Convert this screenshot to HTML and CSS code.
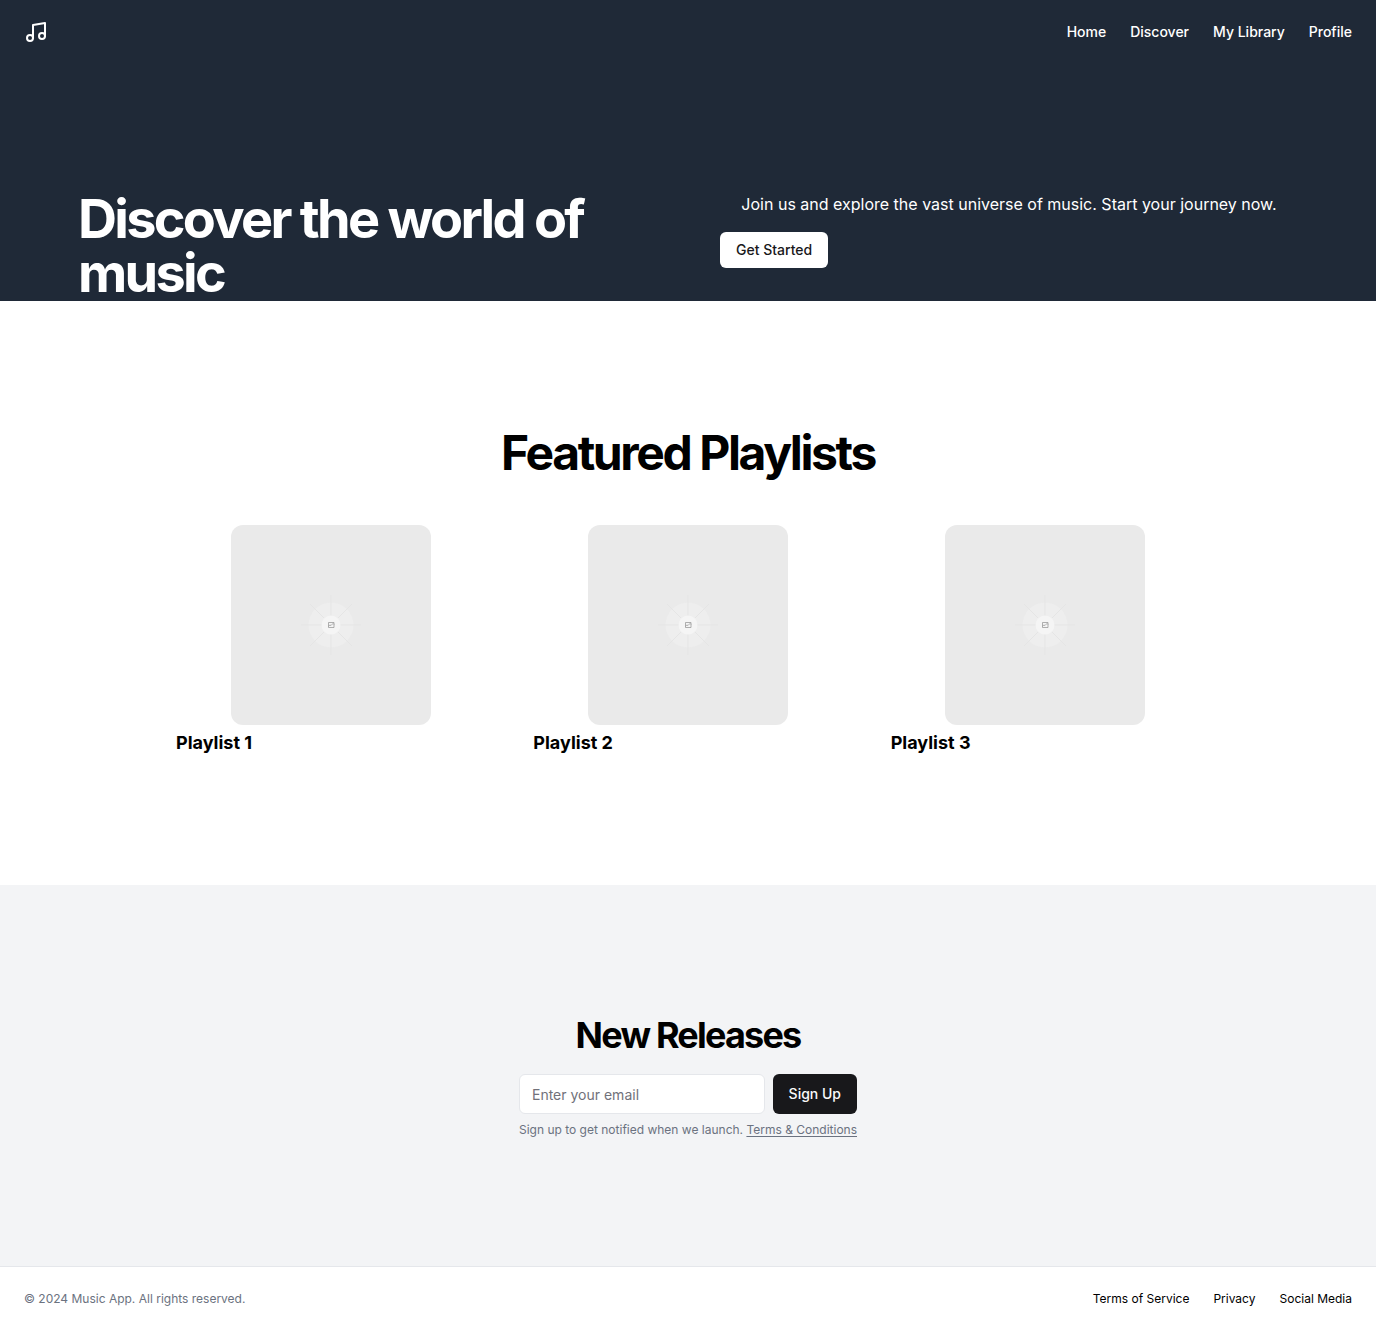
FILE: index.html
```html
<!DOCTYPE html>
<html lang="en">
<head>
  <meta charset="utf-8">
  <meta name="viewport" content="width=device-width, initial-scale=1">
  <title>Music App</title>
  <link rel="stylesheet" href="styles.css">
</head>
<body>
  <svg class="defs" width="0" height="0" aria-hidden="true">
    <symbol id="cover" viewBox="0 0 200 200">
      <circle cx="100" cy="100" r="22.500" fill="#eeeeee"/>
      <g stroke="#e5e5e5" stroke-width="1">
        <path d="M100 70v60M70 100h60M79 79l42 42M121 79l-42 42"/>
      </g>
      <circle cx="100" cy="100" r="9.500" fill="#f5f5f5"/>
      <g fill="none" stroke="#8f8f8f" stroke-width=".7">
        <path d="M97.500 97.500h5.500v5h-5.500z"/>
        <path d="M97.500 101l1.500-1 1 .5 2-2 1 1"/>
      </g>
    </symbol>
  </svg>

  <header class="header">
    <a class="logo" href="#" aria-label="Music App">
      <svg width="24" height="24" viewBox="0 0 24 24" fill="none" stroke="currentColor" stroke-width="2" stroke-linecap="round" stroke-linejoin="round" aria-hidden="true">
        <path d="M9 18V5l12-2v13"/>
        <circle cx="6" cy="18" r="3"/>
        <circle cx="18" cy="16" r="3"/>
      </svg>
    </a>
    <nav class="nav">
      <a href="#">Home</a>
      <a href="#">Discover</a>
      <a href="#">My Library</a>
      <a href="#">Profile</a>
    </nav>
  </header>

  <main>
    <section class="hero">
      <div class="hero-grid">
        <h1>Discover the world of music</h1>
        <div class="hero-side">
          <p>Join us and explore the vast universe of music. Start your journey now.</p>
          <button class="button button-light" type="button">Get Started</button>
        </div>
      </div>
    </section>

    <section class="featured">
      <h2>Featured Playlists</h2>
      <div class="playlists">
        <article class="playlist">
          <svg class="cover" aria-hidden="true"><use href="#cover"/></svg>
          <h3>Playlist 1</h3>
        </article>
        <article class="playlist">
          <svg class="cover" aria-hidden="true"><use href="#cover"/></svg>
          <h3>Playlist 2</h3>
        </article>
        <article class="playlist">
          <svg class="cover" aria-hidden="true"><use href="#cover"/></svg>
          <h3>Playlist 3</h3>
        </article>
      </div>
    </section>

    <section class="releases">
      <h2>New Releases</h2>
      <div class="signup">
        <form class="signup-form">
          <input type="email" placeholder="Enter your email" aria-label="Enter your email">
          <button class="button button-dark" type="submit">Sign Up</button>
        </form>
        <p>Sign up to get notified when we launch. <a href="#">Terms &amp; Conditions</a></p>
      </div>
    </section>
  </main>

  <footer class="footer">
    <p>© 2024 Music App. All rights reserved.</p>
    <nav class="footer-nav">
      <a href="#">Terms of Service</a>
      <a href="#">Privacy</a>
      <a href="#">Social Media</a>
    </nav>
  </footer>
</body>
</html>
```
FILE: styles.css
```css
* {
  box-sizing: border-box;
}

body {
  margin: 0;
  font-family: Inter, "Liberation Sans", sans-serif;
  font-size: 16px;
  line-height: 24px;
  color: #000;
  background: #fff;
}

h1, h2, h3, p {
  margin: 0;
}

h1, h2 {
  font-weight: 700;
  letter-spacing: -0.05em;
}

a {
  color: inherit;
  text-decoration: none;
}

.defs {
  position: absolute;
}

.header {
  display: flex;
  align-items: center;
  justify-content: space-between;
  padding: 20px 24px;
  color: #fff;
  background: #1f2937;
}

.logo {
  display: flex;
}

.nav {
  display: flex;
  gap: 24px;
  font-size: 14px;
  line-height: 20px;
  font-weight: 500;
}

.hero {
  padding-top: 128px;
  border-bottom: 1px solid #1f2937;
  color: #fff;
  background: #1f2937;
}

.hero-grid {
  display: grid;
  grid-template-columns: 1fr 1fr;
  gap: 64px;
  max-width: 1300px;
  margin: 0 auto;
  padding: 0 40px;
}

.hero h1 {
  font-size: 54px;
  line-height: 54px;
}

.hero-side {
  display: flex;
  flex-direction: column;
  align-items: flex-start;
  gap: 16px;
}

.hero-side p {
  align-self: center;
}

.button {
  padding: 0 16px;
  border: 0;
  border-radius: 6px;
  font: 500 14px/20px Inter, "Liberation Sans", sans-serif;
  cursor: pointer;
}

.button-light {
  height: 36px;
  color: #18181b;
  background: #fff;
}

.button-dark {
  height: 40px;
  color: #fafafa;
  background: #18181b;
}

.featured {
  display: flex;
  flex-direction: column;
  align-items: center;
  gap: 48px;
  padding: 128px 24px;
}

.featured h2 {
  font-size: 48px;
  line-height: 48px;
}

.playlists {
  display: grid;
  grid-template-columns: repeat(3, 1fr);
  gap: 48px;
  width: 100%;
  max-width: 1024px;
}

.playlist {
  display: flex;
  flex-direction: column;
  gap: 4px;
}

.cover {
  align-self: center;
  width: 200px;
  height: 200px;
  border-radius: 12px;
  background: #eaeaea;
}

.playlist h3 {
  font-size: 18px;
  line-height: 28px;
  font-weight: 700;
}

.releases {
  display: flex;
  flex-direction: column;
  align-items: center;
  gap: 16px;
  padding: 128px 24px;
  background: #f3f4f6;
}

.releases h2 {
  font-size: 36px;
  line-height: 45px;
}

.signup {
  display: flex;
  flex-direction: column;
  gap: 8px;
}

.signup-form {
  display: flex;
  gap: 8px;
}

.signup-form input {
  flex: 1;
  min-width: 0;
  height: 40px;
  padding: 8px 12px;
  border: 1px solid #e5e7eb;
  border-radius: 6px;
  font: 400 14px/20px Inter, "Liberation Sans", sans-serif;
  background: #fff;
}

.signup-form input::placeholder {
  color: #71717a;
}

.signup p,
.footer {
  font-size: 12px;
  line-height: 16px;
}

.signup p,
.footer p {
  color: #6b7280;
}

.signup a {
  text-decoration: underline;
  text-underline-offset: 2px;
}

.footer {
  display: flex;
  align-items: center;
  justify-content: space-between;
  padding: 24px;
  border-top: 1px solid #e5e7eb;
}

.footer-nav {
  display: flex;
  gap: 24px;
}
```
